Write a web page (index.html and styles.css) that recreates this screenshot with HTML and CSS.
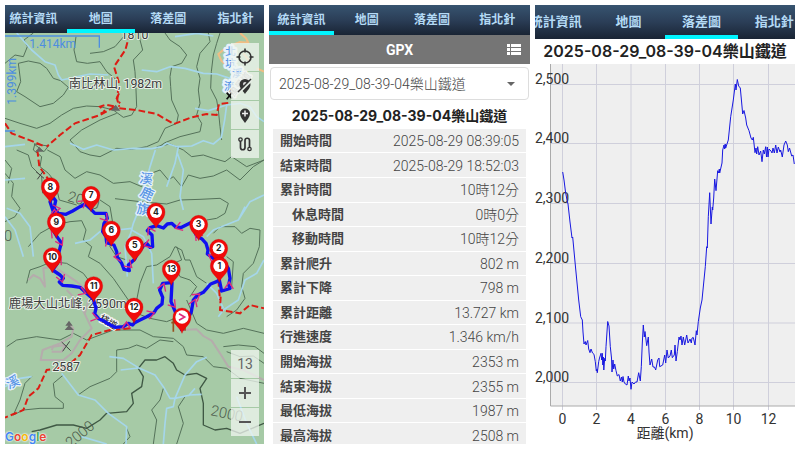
FILE: index.html
```
<!DOCTYPE html>
<html lang="zh-Hant">
<head>
<meta charset="utf-8">
<meta name="viewport" content="width=device-width, initial-scale=1">
<title>GPX</title>
<link rel="stylesheet" href="styles.css">
</head>
<body>
<main class="screens">
  <section class="screen">
    <nav class="tabs tabs-map">
      <button class="tab">統計資訊</button>
      <button class="tab active">地圖</button>
      <button class="tab">落差圖</button>
      <button class="tab">指北針</button>
    </nav>
    <div class="map">
      <svg class="map-canvas" viewBox="15 99 777 1233" preserveAspectRatio="xMidYMid slice">
        <defs>
          <g id="pin">
            <path d="M0 49C-5 32-27 24-27 0A27 27 0 0 1 27 0C27 24 5 32 0 49Z" fill="#f00a0a" stroke="#c80000" stroke-width="1"/>
            <circle r="18" fill="#fff"/>
          </g>
          <path id="arrow" d="M-14-10L8 0L-10 16" fill="none" stroke="#e0287c" stroke-width="4"/>
        </defs>
        <rect x="15" y="99" width="777" height="1233" fill="#a6caa6"/>
        <g class="contour">
          <path d="M15 190L45 165L70 170L82 140L72 120L100 99M55 190L85 183L120 190L140 205L160 235L182 242L205 262L190 285L160 310L120 320L75 290L50 275L62 245L55 190"/>
          <path d="M15 355L60 370L110 385L150 370L185 345L220 325L260 318L300 320L340 330L370 352L395 345L410 320L408 270L405 215L400 180L428 150L420 120L418 99"/>
          <path d="M228 110L222 150L230 185L262 190L300 185L320 215L350 240M375 105L345 140L310 155L270 160"/>
          <path d="M495 99L510 120L540 140L560 165L545 190L515 200L510 230L512 260L515 300L535 345L530 370L495 385L475 425L440 440L395 448L350 445L300 470L270 465L240 455L210 420L245 390L300 360L350 340"/>
          <path d="M625 99L630 125L600 160L590 200L600 235L595 270L600 310L590 345L605 370L600 395L540 410L495 428L470 445"/>
          <path d="M660 99L650 130L640 165L634 215L632 265L650 300L655 330L660 380L665 420"/>
          <path d="M470 440L510 432L550 450L575 470L610 465L640 475L675 485L695 470L740 500L792 480"/>
          <path d="M142 450L180 470L195 510L225 535L260 515L300 525L340 550L390 545L425 560L440 525L480 510L505 540L520 530L545 560L565 525L600 535L640 528L680 510L720 540L760 500L792 480"/>
          <path d="M50 450L85 465L95 500L125 530L128 580M105 430L100 450L125 470L120 500L145 520L165 545L178 600L230 615M102 432L145 438L132 455L102 432"/>
          <path d="M15 520L40 550L35 590L60 625L45 650L15 665M15 480L35 505L25 550"/>
          <path d="M85 740L120 700L165 675L210 665L245 662L258 690L250 720L275 740L265 770L300 790L340 835L385 900L410 940L450 955L500 965L550 945"/>
          <path d="M300 600L330 620L340 680L330 740L350 770L380 780M530 740L545 780L520 790L540 830L570 840L590 860L570 890"/>
          <path d="M345 596L420 605L500 612L540 600L600 598L660 595L685 610L675 640L650 655L620 660"/>
          <path d="M80 850L90 810L120 800L155 785L200 790L250 820L280 860M410 900L420 850L440 800L470 795L510 770L525 740L545 750L555 780L570 780L590 830L620 850"/>
          <path d="M640 700L660 680L705 680L725 700L750 685L780 690L778 740L760 790L730 820L725 860L735 895L710 930L680 950M680 770L700 785L695 860L670 875"/>
          <path d="M20 1040L50 1020L110 1010L180 1020L220 1000L260 1020L300 1005L340 990L420 990L460 1010L520 1015L550 1040L560 1065L610 1070L640 1100L680 1105L720 1135L792 1150"/>
          <path d="M237 1183L270 1160L330 1135L350 1115L350 1050L385 1045L410 1035L440 1045L480 1020L520 1025"/>
          <path class="index" d="M415 1105L435 1080L470 1080L495 1070L520 1090L530 1110L555 1125L590 1120L620 1135L600 1165L610 1210L610 1275L645 1290L680 1285L720 1300L792 1270"/>
          <path class="index" d="M415 1105L430 1130L425 1160L395 1180L400 1210L380 1235L320 1240L300 1260L260 1285L220 1275L170 1275L120 1290L95 1295"/>
          <path d="M190 1125L160 1150L165 1190L190 1210L190 1225L120 1225L70 1230L40 1245L60 1200L75 1150L95 1130"/>
          <path d="M490 1165L480 1200L455 1230L470 1260L460 1332M380 1285L390 1310L370 1332M555 1190L535 1220L550 1270L530 1332"/>
          <path d="M670 1040L715 1035L765 1040L792 1060M680 1055L720 1070L760 1068L792 1090M560 900L590 970L620 990L670 1000L730 985L792 1000"/>
        </g>
        <g class="stream">
          <path d="M50 99L95 150L135 185L165 195L175 225L185 240L270 222L325 225"/>
          <path d="M425 210L470 215L510 200L555 205L610 220L650 222L690 235"/>
          <path d="M525 110L590 100L640 108M585 325L625 332L680 315L720 310L750 320L770 350L792 365"/>
          <path d="M680 315L674 360L664 412L640 432L610 422L575 438L530 440L500 430L485 440L455 446L400 445L340 450L290 435L250 448L210 430"/>
          <path d="M15 440L75 433M466 450L450 500L435 560L420 620L400 670L392 700L375 740L382 830"/>
          <path d="M225 730L270 720L300 695L350 690L395 685M15 540L75 535M20 625L60 640L90 680L100 770M15 650L45 690L70 770"/>
          <path d="M535 440L525 490L500 560M532 460L550 510L540 590L550 630"/>
          <path d="M792 585L750 605L715 660L640 690L620 710M715 660L735 620M395 690L430 710L455 760L460 850"/>
          <path d="M792 780L770 820L735 840L715 900L670 930L655 950M620 850L650 880L670 925"/>
          <path d="M185 1120L235 1185L285 1200L325 1240L380 1280L378 1332M328 1070L370 1075L415 1103L465 1125L490 1160L510 1195L525 1195L520 1220L500 1225L495 1270L490 1332M362 1110L415 1104"/>
          <path d="M620 1072L590 1085L555 1125L525 1195L570 1185L605 1183M565 1188L585 1165M710 1190L740 1270L770 1332M15 1160L60 1135L95 1130M245 1310L320 1332"/>
        </g>
        <g class="road">
          <path class="orange" d="M720 99L738 115L745 128L720 126L680 142L655 162L664 182L690 205M730 160L750 185M770 205L792 215"/>
          <path d="M85 840L100 825L120 835L135 860L130 805L155 800M170 805L230 845L260 870M200 870L240 910L258 950L275 985L240 1020L215 1060L190 1080L122 1080L128 1050L180 1030L215 1010L220 985L210 975"/>
          <path d="M155 1050L160 1040L195 1035L185 1055L155 1055M255 940L265 900M545 990L590 988L610 1008L635 1022L660 1060L685 1100L730 1110L792 1140"/>
        </g>
        <g class="trail">
          <path d="M390 99L376 150L342 200L356 245L352 300L358 320M345 320L300 345L225 370L180 405L140 440M358 325L410 330L470 342L522 372L575 352L620 342L650 345L657 312L690 308"/>
          <path d="M302 340L315 335L300 320L318 314L348 320M357 280L350 295L360 310M15 370L35 400L100 425L135 440M112 450L118 500L150 545"/>
          <path d="M390 985L330 990L275 1005L240 1065L200 1100L140 1110L115 1165L85 1190L70 1230L15 1253"/>
          <path d="M662 890L660 930L720 940L750 915L792 925M655 840L660 900"/>
        </g>
        <path d="M333 332L347 314L361 332ZM106 455L118 440L130 455ZM194 990L207 975L222 990ZM196 977L207 962L218 977Z" fill="#666"/>
        <path class="cross" d="M108 515L132 535M130 513L112 538M185 1026L212 1052M209 1024L188 1054"/>
        <g class="contour-label">
          <text x="200" y="602" transform="rotate(16 200 602)">2000</text>
          <text x="630" y="1245" transform="rotate(12 630 1245)">2000</text>
          <text x="212" y="1345" transform="rotate(-40 212 1345)">2000</text>
          <text x="12" y="724">0</text>
        </g>
        <g class="water-label">
          <text x="418" y="550" transform="rotate(8 436 540)">溪</text>
          <text x="422" y="595" transform="rotate(25 440 580)">鹿</text>
          <text x="410" y="642" transform="rotate(8 430 630)">旗</text>
          <text x="20" y="1162" transform="rotate(-25 36 1150)">溪</text>
        </g>
        <g class="water-label dense">
          <text x="676" y="166">北</text>
          <text x="676" y="200">坑</text>
          <text x="696" y="232">溪</text>
          <text x="672" y="270">流</text>
        </g>
        <g class="road-label">
          <text x="702" y="292" transform="rotate(-52 702 292)">風景道</text>
          <text x="296" y="960" transform="rotate(30 296 960)" class="black">棧道</text>
        </g>
        <path d="M680 278L696 296M696 278L680 298" stroke="#111" stroke-width="5"/>
        <g class="place">
          <text x="362" y="118">1810</text>
          <text x="206" y="263">南比林山, 1982m</text>
          <text x="26" y="924">鹿場大山北峰, 2590m</text>
          <text x="157" y="1112">2587</text>
        </g>
        <g class="ruler">
          <path d="M15 108H298V143M15 393H45"/>
          <text x="88" y="144">1.414km</text>
          <text x="49" y="314" transform="rotate(-90 49 314)">1.399km</text>
        </g>
        <path class="track" d="M546 992L530 945L513 905L516 848L488 850L479 870L488 892L486 912L470 925L462 938L440 950L420 960L404 968L398 975L385 970L370 980L345 982L325 972L310 962L296 956L284 942L288 925L280 898L262 882L240 862L215 858L188 856L178 846L190 835L180 825L158 810L172 790L176 760L184 728L172 712L162 695L172 690L156 655L160 635L150 605L158 590L167 602L162 625L175 640L198 643L218 633L240 620L255 612L273 628L285 640L318 640L322 655L312 670L308 695L318 710L320 728L342 735L350 755L352 772L365 790L372 808L388 812L385 795L404 778L410 765L430 738L440 730L450 742L458 740L456 705L442 692L450 683L470 677L490 684L502 672L515 670L528 682L545 682L572 668L590 708L605 716L618 730L624 750L622 762L640 775L665 775L685 805L690 835L686 855L690 865L665 873L658 840L650 845L632 852L610 877L592 886L580 900L574 935L546 990"/>
        <g>
          <use href="#arrow" x="172" y="625"/><use href="#arrow" transform="translate(162 636) rotate(-80)"/>
          <use href="#arrow" transform="translate(250 606) rotate(-30)"/><use href="#arrow" transform="translate(318 656) rotate(60)"/>
          <use href="#arrow" transform="translate(324 724) rotate(-100)"/><use href="#arrow" transform="translate(350 772) rotate(190)"/>
          <use href="#arrow" transform="translate(390 796) rotate(50)"/><use href="#arrow" transform="translate(440 736) rotate(170)"/>
          <use href="#arrow" transform="translate(448 690) rotate(-110)"/><use href="#arrow" transform="translate(534 684) rotate(170)"/>
          <use href="#arrow" transform="translate(590 706) rotate(-120)"/><use href="#arrow" transform="translate(632 770) rotate(220)"/>
          <use href="#arrow" transform="translate(686 854) rotate(-80)"/><use href="#arrow" transform="translate(592 886) rotate(-30)"/>
          <use href="#arrow" transform="translate(488 858) rotate(-60)"/><use href="#arrow" transform="translate(455 940) rotate(-10)"/>
          <use href="#arrow" transform="translate(378 974) rotate(-80)"/><use href="#arrow" transform="translate(286 952) rotate(20)"/>
          <use href="#arrow" transform="translate(250 876) rotate(30)"/><use href="#arrow" transform="translate(186 838) rotate(80)"/>
          <use href="#arrow" transform="translate(178 778) rotate(-50)"/><use href="#arrow" transform="translate(184 728) rotate(70)"/>
          <use href="#arrow" transform="translate(158 698) rotate(-120)"/><use href="#arrow" transform="translate(522 915) rotate(60)"/>
          <use href="#arrow" transform="translate(582 905) rotate(-60)"/>
        </g>
        <path d="M520 955V995M514 968H528M555 970V992" stroke="#96501e" stroke-width="5"/>
        <g class="pins">
          <g transform="translate(151 560)"><use href="#pin"/><text y="9">8</text></g>
          <g transform="translate(273 586)"><use href="#pin"/><text y="9">7</text></g>
          <g transform="translate(169 665)"><use href="#pin"/><text y="9">9</text></g>
          <g transform="translate(334 690)"><use href="#pin"/><text y="9">6</text></g>
          <g transform="translate(468 636)"><use href="#pin"/><text y="9">4</text></g>
          <g transform="translate(404 736)"><use href="#pin"/><text y="9">5</text></g>
          <g transform="translate(596 673)"><use href="#pin"/><text y="9">3</text></g>
          <g transform="translate(656 745)"><use href="#pin"/><text y="9">2</text></g>
          <g transform="translate(658 798)"><use href="#pin"/><text y="9">1</text></g>
          <g transform="translate(157 770)"><use href="#pin"/><text y="9">10</text></g>
          <g transform="translate(281 857)"><use href="#pin"/><text y="9">11</text></g>
          <g transform="translate(514 807)"><use href="#pin"/><text y="9">13</text></g>
          <g transform="translate(402 921)"><use href="#pin"/><text y="9">12</text></g>
          <g transform="translate(546 951)"><use href="#pin"/><circle r="20" fill="#fff"/><path d="M-9-10L8 0L-9 10" fill="none" stroke="#e0287c" stroke-width="5"/></g>
        </g>
      </svg>
      <div class="tools tools-top">
        <button class="tool" aria-label="定位"><svg viewBox="0 0 28 28"><circle cx="14" cy="14" r="6" fill="none" stroke="#333" stroke-width="1.6"/><path d="M14 5.500v4M14 18.500v4M5.500 14h4M18.500 14h4" stroke="#333" stroke-width="1.6"/></svg></button>
        <button class="tool" aria-label="隱藏航點"><svg viewBox="0 0 28 28"><path d="M14 22c-2-3-5.500-6-5.500-9.500a5.500 5.500 0 0 1 11 0C19.500 16 16 19 14 22Z" fill="#333"/><circle cx="14" cy="12" r="2" fill="#ddd"/><path d="M21 8L8 21" stroke="#e4ece4" stroke-width="2"/><path d="M7 20L20 7" stroke="#333" stroke-width="1.500"/></svg></button>
        <button class="tool" aria-label="新增航點"><svg viewBox="0 0 28 28"><path d="M14 22c-2-3-5-6-5-9.500a5 5 0 0 1 10 0C19 16 16 19 14 22Z" fill="#333"/><path d="M14 9.500v6M11 12.500h6" stroke="#eee" stroke-width="1.500"/></svg></button>
        <button class="tool" aria-label="航跡"><svg viewBox="0 0 28 28"><path d="M9.500 11v6.500a2.250 2.250 0 0 0 4.500 0v-7a2.250 2.250 0 0 1 4.500 0V18" fill="none" stroke="#333" stroke-width="1.700"/><circle cx="9.500" cy="9.500" r="1.700" fill="none" stroke="#333" stroke-width="1.300"/><circle cx="18.500" cy="19" r="1.700" fill="none" stroke="#333" stroke-width="1.300"/></svg></button>
      </div>
      <div class="tools tools-bottom">
        <output class="tool zoom-level">13</output>
        <button class="tool" aria-label="放大"><svg viewBox="0 0 28 28"><path d="M14 8v12M8 14h12" stroke="#555" stroke-width="2"/></svg></button>
        <button class="tool" aria-label="縮小"><svg viewBox="0 0 28 28"><path d="M8 14h12" stroke="#555" stroke-width="2"/></svg></button>
      </div>
      <div class="google"><span class="g-blue">G</span><span class="g-red">o</span><span class="g-yellow">o</span><span class="g-blue">g</span><span class="g-green">l</span><span class="g-red">e</span></div>
    </div>
  </section>

  <section class="screen">
    <nav class="tabs tabs-stats">
      <button class="tab active">統計資訊</button>
      <button class="tab">地圖</button>
      <button class="tab">落差圖</button>
      <button class="tab">指北針</button>
    </nav>
    <header class="bar">
      <h1>GPX</h1>
      <button class="list-button" aria-label="清單"><svg viewBox="0 0 14 11"><path d="M0 0h3v3H0zM4 0h10v3H4zM0 4h3v3H0zM4 4h10v3H4zM0 8h3v3H0zM4 8h10v3H4z" fill="#fff"/></svg></button>
    </header>
    <div class="picker">
      <select aria-label="航跡"><option>2025-08-29_08-39-04樂山鐵道</option></select>
      <svg class="caret" viewBox="0 0 8 4"><path d="M0 0h8L4 4z" fill="#666"/></svg>
    </div>
    <h2 class="stats-title">2025-08-29_08-39-04樂山鐵道</h2>
    <div class="stats-wrap">
      <table class="stats">
        <tr><th>開始時間</th><td>2025-08-29 08:39:05</td></tr>
        <tr><th>結束時間</th><td>2025-08-29 18:52:03</td></tr>
        <tr><th>累計時間</th><td>10時12分</td></tr>
        <tr class="sub"><th>休息時間</th><td>0時0分</td></tr>
        <tr class="sub"><th>移動時間</th><td>10時12分</td></tr>
        <tr><th>累計爬升</th><td>802 m</td></tr>
        <tr><th>累計下降</th><td>798 m</td></tr>
        <tr><th>累計距離</th><td>13.727 km</td></tr>
        <tr><th>行進速度</th><td>1.346 km/h</td></tr>
        <tr><th>開始海拔</th><td>2353 m</td></tr>
        <tr><th>結束海拔</th><td>2355 m</td></tr>
        <tr><th>最低海拔</th><td>1987 m</td></tr>
        <tr><th>最高海拔</th><td>2508 m</td></tr>
      </table>
    </div>
  </section>

  <section class="screen">
    <nav class="tabs tabs-chart">
      <button class="tab">統計資訊</button>
      <button class="tab">地圖</button>
      <button class="tab active">落差圖</button>
      <button class="tab">指北針</button>
    </nav>
    <h2 class="chart-title">2025-08-29_08-39-04樂山鐵道</h2>
    <div class="chart">
      <svg class="chart-canvas" viewBox="535 64 260 380" preserveAspectRatio="xMidYMin meet">
        <rect x="550" y="64" width="245" height="342" fill="#efefef"/>
        <path class="grid" d="M562.500 64V410M596.500 64V410M631 64V410M665.500 64V410M699.500 64V410M733.500 64V410M768.500 64V410M550 84.500H795M550 143.500H795M550 203.500H795M550 263.500H795M550 323H795M550 382.500H795"/>
        <path class="axis" d="M550.500 64V406H795"/>
        <g class="axis-text">
          <text x="535" y="84">2,500</text>
          <text x="535" y="143">2,400</text>
          <text x="535" y="203">2,300</text>
          <text x="535" y="263">2,200</text>
          <text x="535" y="323">2,100</text>
          <text x="535" y="382">2,000</text>
        </g>
        <g class="axis-text mid">
          <text x="562.500" y="424">0</text>
          <text x="596.500" y="424">2</text>
          <text x="631" y="424">4</text>
          <text x="665.500" y="424">6</text>
          <text x="699.500" y="424">8</text>
          <text x="733.500" y="424">10</text>
          <text x="768.500" y="424">12</text>
          <text x="665" y="438">距離(km)</text>
        </g>
        <polyline class="profile" points="562.700,172 564,180 565.500,192 567,200 568,204 570,222 572,238 572.700,237 575.300,265 578.700,300 580.700,316.700 582.300,320 583,332 584,344 585.300,341.500 586,345 587.700,340.500 588.700,349 590,352.700 591,349 592.500,353 594,354.300 595.300,361.700 596.300,371 597,369 597.300,372.700 598.700,361.700 599.500,358 601,353.300 601.700,360 602.300,353.300 602.800,365 603.300,357 603.800,370 604.700,358.300 605.300,361 606,346.700 607.700,321.500 609,326 610.300,346.700 611.500,358 612,372 613,360 613.700,369 614.700,364 616,370.700 617.300,376 619,374.500 620.300,381 621.500,377 622.300,382 623,376.500 624,382 625.300,384 627,385 628.300,376 629,381 630,378 631,389.300 632,382 634,384 635.500,382 637,382 638.700,372.700 640.300,381 641.300,366.700 642.300,343 643.300,325 644.300,337 645,331.500 646.700,345.700 648.300,337 649,352 650,365 651.700,359 653,367 654.500,367 655.700,370 657.700,360 659,358 659.700,366.700 662.700,365 664.700,355 665.700,363 667,350 668.300,358 670,356 671.300,350 672.300,357.700 674.300,355 675,345 676,361 677.300,351.700 679,337 680,340 681,336 682,345 683.300,337 684.700,345 686.700,335 688,343 690,339 691.300,343 692,338 693.300,337.500 695,345 696.300,330.700 697,335 698.300,321.700 700.300,308 702,300 702.700,293 705.300,266.700 706.700,246.700 707.300,248 708.300,216.700 709.700,192.700 711,224 712.300,207 712.700,210 713.700,198 714.700,179 716,190.700 717.700,170.700 718.500,173 719.300,169 719.700,173 722,163 722.700,150 724,145 724.700,149 725.200,144 725.700,148 728.300,140 730.700,116.700 733.300,100 735.300,84 736,90 737.300,79.500 738.700,86 740.300,88 741.700,103 742.700,114 744,110.500 745.700,118 746.700,125 749,130.700 751,138 752.300,140 753.300,137.300 755,152.700 756,148 756.700,154 757.700,146.700 759,155 760.700,151 762,161.700 763.300,150 764.300,154 765.700,146.700 766.500,157 767.300,147 768,157 769,149 771,151 772,153 773,148 774.300,153 775.700,145 777,153 778.300,147 780,152 780.700,150 782.300,157 784,145 785.700,141 787.300,145 788.300,151.700 789.500,148 791.700,156 793,155 794.300,164"/>
      </svg>
    </div>
  </section>
</main>
</body>
</html>
```

FILE: styles.css
```
* {
  box-sizing: border-box;
}

body {
  margin: 0;
  background: #fff;
  font-family: Roboto, "Noto Sans CJK TC", sans-serif;
  color: #444;
}

button {
  border: 0;
  margin: 0;
  padding: 0;
  background: none;
  font: inherit;
  color: inherit;
}

.screens {
  display: grid;
  grid-template-columns: 259fr 261fr 260fr;
  gap: 5px;
  height: 100vh;
  min-height: 440px;
  padding: 5px;
}

.screen {
  display: flex;
  flex-direction: column;
  min-width: 0;
  min-height: 0;
  overflow: hidden;
}

/* Tab strips */
.tabs {
  display: flex;
  flex: none;
  overflow: hidden;
  background: linear-gradient(#375470, #2b3e57 50%, #192434);
  color: #b4daf5;
  font-size: 12px;
  font-weight: 700;
}

.tab {
  flex: none;
  border-bottom: 4px solid transparent;
  white-space: nowrap;
}

.tab.active {
  border-bottom-color: #00f5ff;
}

.tabs-map {
  height: 28px;
  justify-content: center;
}

.tabs-map .tab {
  width: 26%;
}

.tabs-stats {
  height: 30px;
}

.tabs-stats .tab {
  width: 25%;
}

.tabs-chart {
  height: 34px;
  justify-content: center;
  font-size: 13px;
}

.tabs-chart .tab {
  width: 28%;
}

/* Map */
.map {
  position: relative;
  flex: 1;
  min-height: 0;
  overflow: hidden;
}

.map-canvas {
  display: block;
  width: 100%;
  height: 100%;
}

.contour path {
  fill: none;
  stroke: #55725a;
  stroke-width: 3;
  stroke-linejoin: round;
}

.contour .index {
  stroke: #3f5844;
  stroke-width: 4;
}

.stream path {
  fill: none;
  stroke: #a5d6ea;
  stroke-width: 5;
  stroke-linejoin: round;
}

.road path {
  fill: none;
  stroke: #b5acac;
  stroke-width: 6;
  stroke-linejoin: round;
}

.road .orange {
  stroke: #f0bd84;
}

.trail path {
  fill: none;
  stroke: #dc1c14;
  stroke-width: 6;
  stroke-dasharray: 20 9;
}

.cross {
  fill: none;
  stroke: #444;
  stroke-width: 3;
}

.track {
  fill: none;
  stroke: #1010f0;
  stroke-width: 10;
  stroke-linejoin: round;
}

.contour-label {
  fill: #4c5a4c;
  font-size: 44px;
  font-weight: 300;
}

.water-label {
  fill: #5a96e6;
  stroke: #e6f2fa;
  stroke-width: 8;
  stroke-linejoin: round;
  paint-order: stroke;
  font-size: 40px;
  font-weight: 500;
}

.water-label.dense {
  stroke-width: 14;
  font-size: 32px;
}

.road-label {
  fill: #999;
  stroke: #f4f4f4;
  stroke-width: 8;
  stroke-linejoin: round;
  paint-order: stroke;
  font-size: 28px;
}

.road-label .black {
  fill: #222;
}

.place {
  fill: #3c3c3c;
  stroke: #e8f0e8;
  stroke-width: 6;
  stroke-linejoin: round;
  paint-order: stroke;
  font-size: 37px;
}

.ruler path {
  fill: none;
  stroke: #4d8ee0;
  stroke-width: 4;
}

.ruler text {
  fill: #4d8ee0;
  font-size: 36px;
}

.pins text {
  fill: #222;
  font-family: Inter, sans-serif;
  font-size: 26px;
  font-weight: 700;
  text-anchor: middle;
}

.tools {
  position: absolute;
  right: 5px;
  display: flex;
  flex-direction: column;
  gap: 1px;
}

.tools-top {
  top: 10px;
}

.tools-bottom {
  bottom: 8px;
}

.tool {
  display: flex;
  align-items: center;
  justify-content: center;
  width: 28px;
  height: 28px;
  background: rgba(240, 245, 240, 0.75);
}

.tool svg {
  width: 28px;
  height: 28px;
}

.zoom-level {
  color: #666;
  font-size: 14px;
}

.google {
  position: absolute;
  left: 0;
  bottom: 0;
  font-family: Inter, sans-serif;
  font-size: 12px;
  font-weight: 600;
  line-height: 15px;
  text-shadow: 0 0 2px #fff, 0 0 2px #fff;
}

.g-blue { color: #4285f4; }
.g-red { color: #ea4335; }
.g-yellow { color: #f6b70a; }
.g-green { color: #34a853; }

/* Statistics */
.bar {
  display: grid;
  grid-template-columns: 1fr auto 1fr;
  align-items: center;
  flex: none;
  height: 29px;
  padding: 0 9px;
  background: #757575;
  color: #fff;
}

.bar h1 {
  grid-column: 2;
  margin: 0;
  font-size: 14px;
  font-weight: 700;
}

.list-button {
  justify-self: end;
  width: 14px;
  height: 11px;
}

.list-button svg {
  display: block;
}

.picker {
  position: relative;
  flex: none;
  margin: 3px 1px 0;
}

.picker select {
  display: block;
  width: 100%;
  height: 33px;
  padding: 0 28px 0 8px;
  border: 1px solid #ddd;
  border-radius: 4px;
  appearance: none;
  background: #fff;
  color: #444;
  font: inherit;
  font-size: 14px;
  font-weight: 300;
}

.caret {
  position: absolute;
  top: 15px;
  right: 14px;
  width: 8px;
  height: 4px;
}

.stats-title,
.chart-title {
  flex: none;
  margin: 0;
  color: #222;
  font-family: Inter, "Noto Sans CJK TC", sans-serif;
  font-weight: 600;
  text-align: center;
  white-space: nowrap;
}

.stats-title {
  height: 29px;
  padding-top: 2px;
  font-size: 14px;
  font-weight: 700;
  line-height: 28px;
}

/* The list runs on past the lower edge of the screen */
.stats-wrap {
  display: grid;
  flex: 1;
  min-height: 0;
  margin-bottom: -4px;
  padding: 0 4px;
}

.stats {
  width: 100%;
  border-collapse: collapse;
}

.stats tr {
  background: #efefef;
  border-bottom: 1px solid #fff;
}

.stats th,
.stats td {
  padding: 1px 7px 0;
  line-height: 20px;
  white-space: nowrap;
}

.stats th {
  font-size: 13px;
  font-weight: 700;
  text-align: left;
}

.stats td {
  color: #444;
  font-size: 14px;
  font-weight: 300;
  text-align: right;
}

.stats .sub th {
  padding-left: 19px;
}

/* Elevation chart */
.chart-title {
  height: 25px;
  font-size: 16px;
  line-height: 24px;
}

.chart {
  flex: 1;
  min-height: 0;
}

.chart-canvas {
  display: block;
  width: 100%;
  height: 100%;
}

.grid {
  fill: none;
  stroke: #cfcfdb;
  stroke-width: 1;
}

.axis {
  fill: none;
  stroke: #aaa;
  stroke-width: 1;
}

.axis-text {
  fill: #333;
  font-size: 14px;
}

.mid {
  text-anchor: middle;
}

.profile {
  fill: none;
  stroke: #1818e0;
  stroke-width: 1;
  stroke-linejoin: round;
}
```
